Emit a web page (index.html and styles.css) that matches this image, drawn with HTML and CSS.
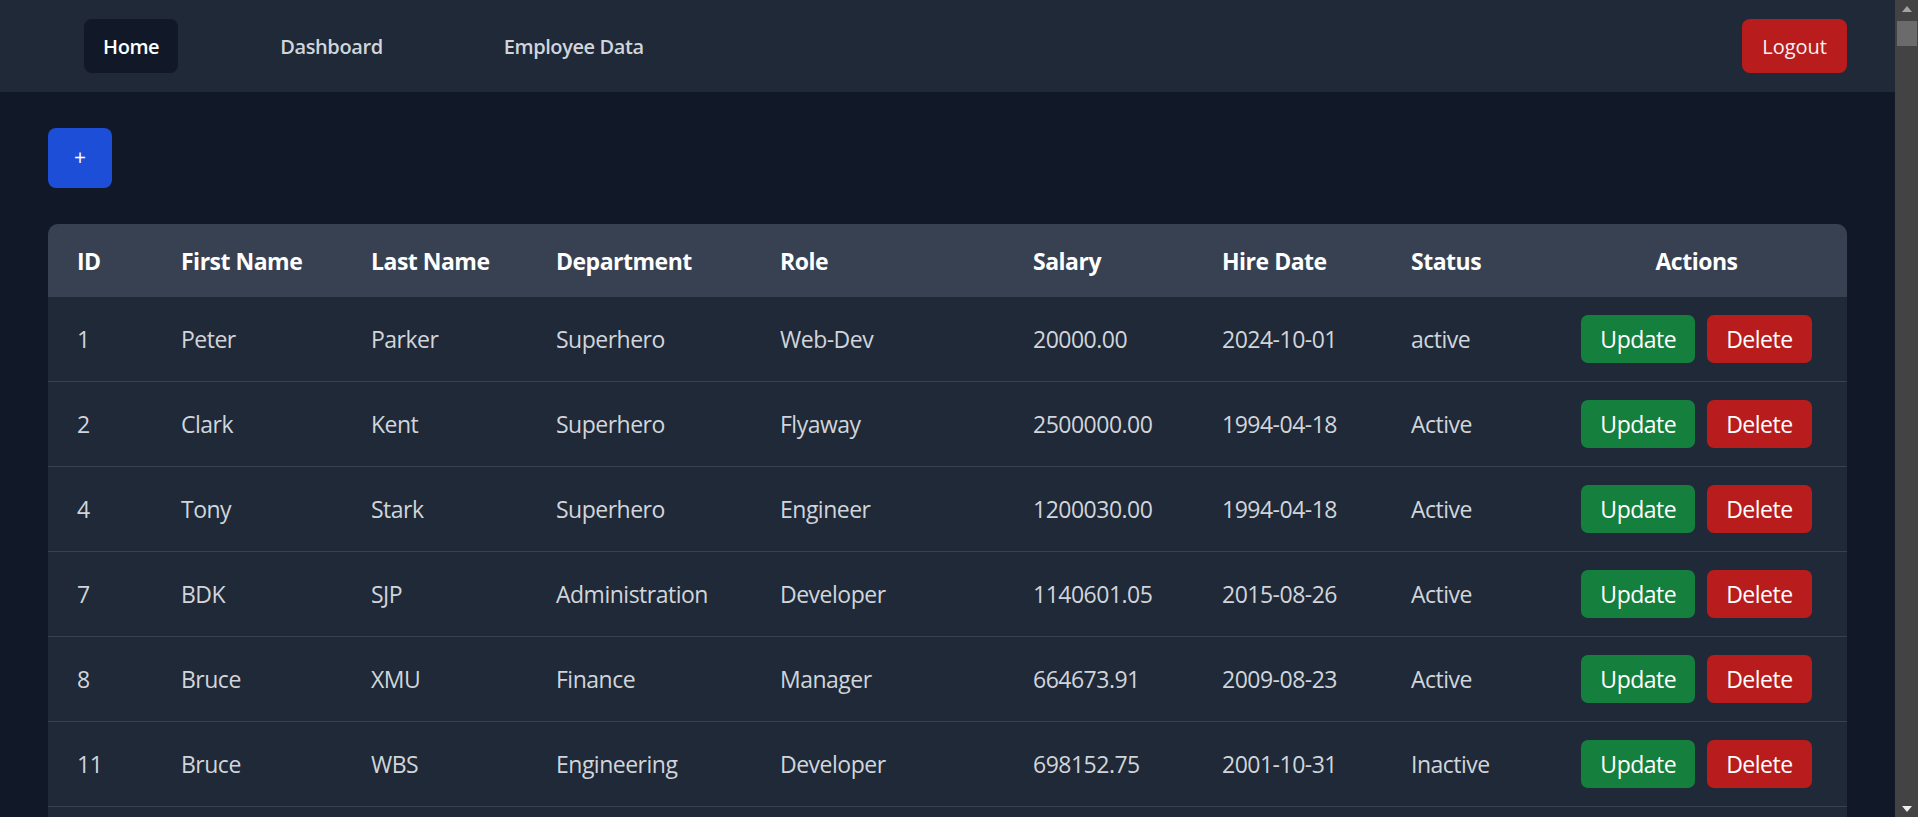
FILE: index.html
```html
<!DOCTYPE html>
<html lang="en">
<head>
<meta charset="utf-8">
<title>Employee Management</title>
<link rel="stylesheet" href="styles.css">
</head>
<body>
<div class="app">
  <div class="page">
    <nav class="navbar">
      <div class="nav-links">
        <a class="nav-link active" href="#">Home</a>
        <a class="nav-link" href="#">Dashboard</a>
        <a class="nav-link" href="#">Employee Data</a>
      </div>
      <button class="logout-btn">Logout</button>
    </nav>
    <main class="content">
      <button class="add-btn">+</button>
      <div class="table-wrap">
        <table class="emp-table">
          <colgroup>
            <col class="c-id"><col class="c-first"><col class="c-last"><col class="c-dept"><col class="c-role"><col class="c-salary"><col class="c-date"><col class="c-status"><col class="c-actions">
          </colgroup>
          <thead>
            <tr>
              <th>ID</th><th>First Name</th><th>Last Name</th><th>Department</th><th>Role</th><th>Salary</th><th>Hire Date</th><th>Status</th><th class="center">Actions</th>
            </tr>
          </thead>
          <tbody>
            <tr><td>1</td><td>Peter</td><td>Parker</td><td>Superhero</td><td>Web-Dev</td><td>20000.00</td><td>2024-10-01</td><td>active</td><td class="center"><div class="actions"><button class="btn btn-update">Update</button><button class="btn btn-delete">Delete</button></div></td></tr>
            <tr><td>2</td><td>Clark</td><td>Kent</td><td>Superhero</td><td>Flyaway</td><td>2500000.00</td><td>1994-04-18</td><td>Active</td><td class="center"><div class="actions"><button class="btn btn-update">Update</button><button class="btn btn-delete">Delete</button></div></td></tr>
            <tr><td>4</td><td>Tony</td><td>Stark</td><td>Superhero</td><td>Engineer</td><td>1200030.00</td><td>1994-04-18</td><td>Active</td><td class="center"><div class="actions"><button class="btn btn-update">Update</button><button class="btn btn-delete">Delete</button></div></td></tr>
            <tr><td>7</td><td>BDK</td><td>SJP</td><td>Administration</td><td>Developer</td><td>1140601.05</td><td>2015-08-26</td><td>Active</td><td class="center"><div class="actions"><button class="btn btn-update">Update</button><button class="btn btn-delete">Delete</button></div></td></tr>
            <tr><td>8</td><td>Bruce</td><td>XMU</td><td>Finance</td><td>Manager</td><td>664673.91</td><td>2009-08-23</td><td>Active</td><td class="center"><div class="actions"><button class="btn btn-update">Update</button><button class="btn btn-delete">Delete</button></div></td></tr>
            <tr><td>11</td><td>Bruce</td><td>WBS</td><td>Engineering</td><td>Developer</td><td>698152.75</td><td>2001-10-31</td><td>Inactive</td><td class="center"><div class="actions"><button class="btn btn-update">Update</button><button class="btn btn-delete">Delete</button></div></td></tr>
          </tbody>
        </table>
      </div>
    </main>
  </div>
  <div class="scrollbar">
    <div class="sb-btn"><span class="sb-tri up"></span></div>
    <div class="sb-thumb"></div>
    <div class="sb-track"></div>
    <div class="sb-btn"><span class="sb-tri down"></span></div>
  </div>
</div>
</body>
</html>
```
FILE: styles.css
```css
* { box-sizing: border-box; }
html, body {
  margin: 0;
  padding: 0;
  height: 100%;
  overflow: hidden;
  background: #111827;
  font-family: "Open Sans", "Noto Sans", "Liberation Sans", sans-serif;
}
.app {
  display: flex;
  height: 100vh;
}
.page {
  flex: 1;
  min-width: 0;
  overflow: hidden;
}
.navbar {
  height: 92px;
  background: #1f2937;
  display: flex;
  align-items: center;
  justify-content: space-between;
  padding: 0 48px 0 84px;
}
.nav-links {
  display: flex;
  gap: 83px;
}
.nav-link {
  display: flex;
  align-items: center;
  height: 54px;
  padding: 0 19px;
  border-radius: 8px;
  font-size: 20px;
  font-weight: 600;
  letter-spacing: -0.4px;
  color: #d1d5db;
  text-decoration: none;
}
.nav-link.active {
  background: #111827;
  color: #ffffff;
}
.logout-btn {
  height: 54px;
  padding: 0 20px;
  border: none;
  border-radius: 8px;
  background: #b91c1c;
  color: #f3f4f6;
  font-family: inherit;
  font-size: 20px;
}
.content {
  padding: 36px 48px 0 48px;
}
.add-btn {
  display: block;
  width: 64px;
  height: 60px;
  border: none;
  border-radius: 8px;
  background: #1d4ed8;
  color: #ffffff;
  font-family: inherit;
  font-size: 21px;
  padding: 0 0 2px 0;
  margin-bottom: 36px;
}
.table-wrap {
  border-radius: 10px 10px 0 0;
  overflow: hidden;
  background: #1f2937;
  padding-bottom: 40px;
}
.emp-table {
  width: 100%;
  table-layout: fixed;
  border-collapse: separate;
  border-spacing: 0;
}
.c-id { width: 104px; }
.c-first { width: 190px; }
.c-last { width: 185px; }
.c-dept { width: 224px; }
.c-role { width: 253px; }
.c-salary { width: 189px; }
.c-date { width: 189px; }
.c-status { width: 164px; }
.c-actions { width: 301px; }
.emp-table th {
  height: 73px;
  padding: 0 0 0 29px;
  background: #374151;
  color: #ffffff;
  font-size: 23px;
  font-weight: 700;
  letter-spacing: -0.5px;
  text-align: left;
  vertical-align: middle;
  white-space: nowrap;
}
.emp-table td {
  height: 85px;
  padding: 0 0 0 29px;
  border-bottom: 1px solid #374151;
  color: #d1d5db;
  font-size: 23px;
  letter-spacing: -0.5px;
  vertical-align: middle;
  white-space: nowrap;
}
.emp-table th.center,
.emp-table td.center {
  text-align: center;
  padding: 0;
}
.actions {
  display: flex;
  justify-content: center;
  gap: 12px;
}
.btn {
  height: 48px;
  padding: 0 19px;
  border: none;
  border-radius: 7px;
  color: #ffffff;
  font-family: inherit;
  font-size: 23px;
  letter-spacing: -0.5px;
}
.btn-update { background: #15803d; }
.btn-delete { background: #b91c1c; }
.scrollbar {
  width: 23px;
  height: 100vh;
  background: #434343;
  display: flex;
  flex-direction: column;
}
.sb-btn {
  height: 17px;
  display: flex;
  align-items: center;
  justify-content: center;
  padding-left: 1px;
}
.sb-tri {
  width: 0;
  height: 0;
  border-left: 5px solid transparent;
  border-right: 5px solid transparent;
}
.sb-tri.up { border-bottom: 6px solid #a3a3a3; margin-top: 1px; }
.sb-tri.down { border-top: 6px solid #ececec; }
.sb-thumb {
  height: 25px;
  margin: 4px 1px 0 2px;
  background: #6b6b6b;
}
.sb-track { flex: 1; }
```
